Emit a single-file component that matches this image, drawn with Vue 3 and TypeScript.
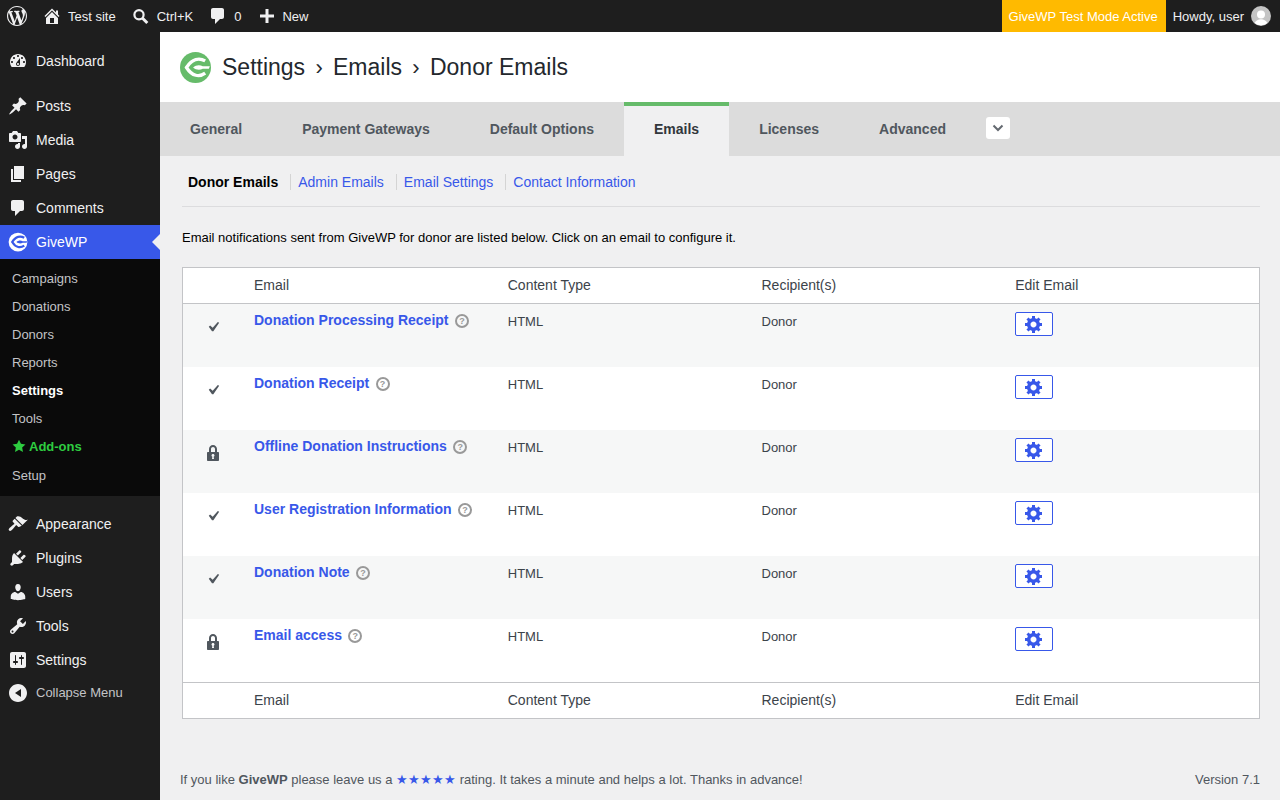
<script setup lang="ts">
const icons: Record<string, string> = {
  dashboard: 'M3.76 16h12.48c1.1-1.37 1.76-3.11 1.76-5 0-4.42-3.58-8-8-8s-8 3.58-8 8c0 1.89.66 3.63 1.76 5zM10 4c.55 0 1 .45 1 1s-.45 1-1 1-1-.45-1-1 .45-1 1-1zM6 6c.55 0 1 .45 1 1s-.45 1-1 1-1-.45-1-1 .45-1 1-1zm8 0c.55 0 1 .45 1 1s-.45 1-1 1-1-.45-1-1 .45-1 1-1zm-5.37 5.55L12 7v6c0 1.1-.9 2-2 2s-2-.9-2-2c0-.57.24-1.08.63-1.45zM4 10c.55 0 1 .45 1 1s-.45 1-1 1-1-.45-1-1 .45-1 1-1zm12 0c.55 0 1 .45 1 1s-.45 1-1 1-1-.45-1-1 .45-1 1-1zm-5 3c0-.55-.45-1-1-1s-1 .45-1 1 .45 1 1 1 1-.45 1-1z',
  pin: 'M10.44 3.02l1.82-1.82 6.36 6.35-1.83 1.82c-1.05-.68-2.48-.57-3.41.36l-.75.75c-.92.93-1.04 2.35-.35 3.41l-1.83 1.82-2.41-2.41-2.8 2.79c-.42.42-3.38 2.71-3.8 2.29s1.86-3.39 2.28-3.81l2.79-2.79L4.1 9.36l1.83-1.82c1.05.69 2.48.57 3.4-.36l.75-.75c.93-.92 1.05-2.35.36-3.41z',
  media: 'M13 11V4c0-.55-.45-1-1-1h-1.67L9 1H5L3.67 3H2c-.55 0-1 .45-1 1v7c0 .55.45 1 1 1h10c.55 0 1-.45 1-1zM7 4.5c1.38 0 2.5 1.12 2.5 2.5S8.38 9.5 7 9.5 4.5 8.38 4.5 7 5.62 4.5 7 4.5zM14 6h5v10.5c0 1.38-1.12 2.5-2.5 2.5S14 17.88 14 16.5s1.12-2.5 2.5-2.5c.17 0 .34.02.5.05V9h-3V6zm-4 8.05V13h2v3.5c0 1.38-1.12 2.5-2.5 2.5S7 17.88 7 16.5 8.12 14 9.5 14c.17 0 .34.02.5.05z',
  page: 'M6 15V2h10v13H6zm-1 1h8v2H3V5h2v11z',
  comment: 'M5 2h9c1.1 0 2 .9 2 2v7c0 1.1-.9 2-2 2h-2l-5 5v-5H5c-1.1 0-2-.9-2-2V4c0-1.1.9-2 2-2z',
  appearance: 'M14.48 11.06L7.41 3.99l1.5-1.5c.5-.56 2.3-.47 3.51.32 1.21.8 1.43 1.28 2.91 2.1 1.18.64 2.45 1.26 4.45.85zm-.71.71L6.7 4.7 4.93 6.47c-.39.39-.39 1.02 0 1.41l1.06 1.06c.39.39.39 1.03 0 1.42-.6.6-1.43 1.11-2.21 1.69-.35.26-.7.53-1.01.84C1.43 13.71-.05 15.38 1.09 16.53c1.15 1.15 2.81-.33 3.99-1.68.31-.31.58-.66.84-1.01.58-.78 1.09-1.61 1.69-2.21.39-.39 1.03-.39 1.42 0l1.06 1.06c.39.39 1.02.39 1.41 0z',
  plugin: 'M13.11 4.36L9.87 7.6 8 5.73l3.24-3.24c.35-.34 1.05-.2 1.56.32.52.51.66 1.21.31 1.55zm-8 1.77l.91-1.12 9.01 9.01-1.19.84c-.71.71-2.63 1.16-3.82 1.16H6.14L4.9 17.26c-.59.59-1.54.59-2.12 0-.59-.58-.59-1.53 0-2.12l1.24-1.24v-3.88c0-1.13.4-3.19 1.09-3.89zm7.26 3.97l3.24-3.24c.34-.35 1.04-.21 1.55.31.52.51.66 1.21.31 1.55l-3.24 3.25z',
  users: 'M10 9.25c-2.27 0-2.73-3.44-2.73-3.44C7 4.02 7.82 2 9.97 2c2.16 0 2.98 2.02 2.71 3.81 0 0-.41 3.44-2.68 3.44zm0 2.57L12.72 10c2.39 0 4.52 2.33 4.52 4.53v2.49s-3.65 1.13-7.24 1.13c-3.65 0-7.24-1.13-7.24-1.13v-2.49c0-2.25 1.94-4.48 4.47-4.48z',
  tools: 'M16.68 9.77c-1.34 1.34-3.3 1.67-4.95.99l-5.41 6.52c-.99.99-2.59.99-3.58 0s-.99-2.59 0-3.57l6.52-5.42c-.68-1.65-.35-3.61.99-4.95 1.28-1.28 3.12-1.62 4.72-1.06l-2.89 2.89 2.82 2.82 2.86-2.87c.53 1.58.18 3.39-1.08 4.65zM3.81 16.21c.4.39 1.04.39 1.43 0 .4-.4.4-1.04 0-1.43-.39-.4-1.03-.4-1.43 0-.39.39-.39 1.03 0 1.43z',
  settings: 'M18 16V4c0-1.1-.9-2-2-2H4c-1.1 0-2 .9-2 2v12c0 1.1.9 2 2 2h12c1.1 0 2-.9 2-2zM8 11h1c.55 0 1 .45 1 1s-.45 1-1 1H8v1.5c0 .28-.22.5-.5.5s-.5-.22-.5-.5V13H6c-.55 0-1-.45-1-1s.45-1 1-1h1V5.5c0-.28.22-.5.5-.5s.5.22.5.5V11zm5-2h-1c-.55 0-1-.45-1-1s.45-1 1-1h1V5.5c0-.28.22-.5.5-.5s.5.22.5.5V7h1c.55 0 1 .45 1 1s-.45 1-1 1h-1v5.5c0 .28-.22.5-.5.5s-.5-.22-.5-.5V9z',
  collapse: 'M10 19c5 0 9-4 9-9s-4-9-9-9-9 4-9 9 4 9 9 9zm3-13v8l-6-4z',
  wp: 'M20 10c0-5.51-4.49-10-10-10C4.48 0 0 4.49 0 10c0 5.52 4.48 10 10 10 5.51 0 10-4.48 10-10zM7.78 15.37L4.37 6.22c.55-.02 1.17-.08 1.17-.08.5-.06.44-1.13-.06-1.11 0 0-1.45.11-2.37.11-.18 0-.37 0-.58-.01C4.12 2.69 6.87 1.11 10 1.11c2.33 0 4.45.87 6.05 2.34-.68-.11-1.65.39-1.65 1.58 0 .74.45 1.36.9 2.1.35.61.55 1.36.55 2.46 0 1.49-1.4 5-1.4 5l-3.03-8.37c.54-.02.82-.17.82-.17.5-.05.44-1.25-.06-1.22 0 0-1.44.12-2.38.12-.87 0-2.33-.12-2.33-.12-.5-.03-.56 1.2-.06 1.22l.92.08 1.26 3.41zM17.41 10c.24-.64.74-1.87.43-4.25.7 1.29 1.05 2.71 1.05 4.25 0 3.29-1.73 6.24-4.4 7.78.97-2.59 1.94-5.2 2.92-7.78zM6.1 18.09C3.12 16.65 1.11 13.53 1.11 10c0-1.3.23-2.48.72-3.59C3.25 10.3 4.67 14.2 6.1 18.09zm4.03-6.63l2.58 6.98c-.86.29-1.76.45-2.71.45-.79 0-1.57-.11-2.29-.33.81-2.38 1.62-4.74 2.42-7.1z',
  home: 'M16 8.5l1.53 1.53-1.06 1.06L10 4.62l-6.47 6.47-1.06-1.06L10 2.5l4 4v-2h2v4zm-6-2.46l6 5.99V18H4v-5.97zM12 17v-5H8v5h4z',
  plus: 'M17 8.500v3h-5.500V17h-3v-5.500H3v-3h5.500V3h3v5.500z',
  check: 'M14.83 4.89l1.34.94-5.81 8.38H9.02L5.78 9.67l1.34-1.25 2.57 2.4z',
  lock: 'M14 9h1c.55 0 1 .45 1 1v7c0 .55-.45 1-1 1H5c-.55 0-1-.45-1-1v-7c0-.55.45-1 1-1h1V6c0-2.21 1.79-4 4-4s4 1.79 4 4v3zm-2 0V6c0-1.1-.9-2-2-2s-2 .9-2 2v3h4zm-1 7l-.36-2.15c.51-.24.86-.75.86-1.35 0-.83-.67-1.5-1.5-1.5s-1.5.67-1.5 1.5c0 .6.35 1.11.86 1.35L9 16h2z',
  gear: 'M18 12h-2.18c-.17.7-.44 1.35-.81 1.93l1.54 1.54-2.1 2.1-1.54-1.54c-.58.36-1.23.63-1.91.79V19H8v-2.18c-.68-.16-1.33-.43-1.91-.79l-1.54 1.54-2.12-2.12 1.54-1.54c-.36-.58-.63-1.23-.79-1.91H1V9.03h2.17c.16-.7.44-1.35.8-1.94L2.43 5.55l2.1-2.1 1.54 1.54c.58-.37 1.24-.64 1.93-.81V2h3v2.18c.68.16 1.33.43 1.91.79l1.54-1.54 2.12 2.12-1.54 1.54c.36.59.64 1.24.8 1.94H18V12zm-8.5 1.5c1.66 0 3-1.34 3-3s-1.34-3-3-3-3 1.34-3 3 1.34 3 3 3z',
  star: 'M10 1l2.8 5.9 6.4.8-4.7 4.4 1.2 6.4L10 15.4l-5.7 3.1 1.2-6.4L.8 7.7l6.4-.8z'
}

const giveBand = 'M26 9.200C20 5.800 12.500 6.800 6.700 16c5.800 9.200 13.300 10.200 19.300 5.800'
const giveLeaf = 'M13.500 16c3-2.800 7-3.200 10-1.200h7.300l-1 2.400h-6.300c-3 1.800-7 1.500-10-1.200z'

const topMenu = [{ label: 'Dashboard', icon: 'dashboard' }]
const contentMenu = [
  { label: 'Posts', icon: 'pin' },
  { label: 'Media', icon: 'media' },
  { label: 'Pages', icon: 'page' },
  { label: 'Comments', icon: 'comment' }
]
const subMenu = ['Campaigns', 'Donations', 'Donors', 'Reports', 'Settings', 'Tools', 'Add-ons', 'Setup']
const lowerMenu = [
  { label: 'Appearance', icon: 'appearance' },
  { label: 'Plugins', icon: 'plugin' },
  { label: 'Users', icon: 'users' },
  { label: 'Tools', icon: 'tools' },
  { label: 'Settings', icon: 'settings' }
]
const tabs = ['General', 'Payment Gateways', 'Default Options', 'Emails', 'Licenses', 'Advanced']
const sections = ['Donor Emails', 'Admin Emails', 'Email Settings', 'Contact Information']
const columns = ['Email', 'Content Type', 'Recipient(s)', 'Edit Email']
const emails = [
  { name: 'Donation Processing Receipt', status: 'check' },
  { name: 'Donation Receipt', status: 'check' },
  { name: 'Offline Donation Instructions', status: 'lock' },
  { name: 'User Registration Information', status: 'check' },
  { name: 'Donation Note', status: 'check' },
  { name: 'Email access', status: 'lock' }
]
</script>

<template>
  <div class="page">
    <header class="adminbar">
      <div class="adminbar__group">
        <svg class="adminbar__wp" viewBox="0 0 20 20"><path :d="icons.wp" /></svg>
        <span class="adminbar__item"><svg viewBox="0 0 20 20"><path :d="icons.home" /></svg>Test site</span>
        <span class="adminbar__item">
          <svg viewBox="0 0 20 20"><circle cx="8" cy="8.700" r="4.600" fill="none" stroke="currentColor" stroke-width="2.200" /><path d="M11.300 12l5 5" stroke="currentColor" stroke-width="3" /></svg>Ctrl+K
        </span>
        <span class="adminbar__item adminbar__item--count"><svg viewBox="0 0 20 20"><path :d="icons.comment" /></svg>0</span>
        <span class="adminbar__item adminbar__item--new"><svg viewBox="0 0 20 20"><path :d="icons.plus" /></svg>New</span>
      </div>
      <div class="adminbar__group">
        <span class="adminbar__test">GiveWP Test Mode Active</span>
        <span class="adminbar__user">
          Howdy, user
          <svg class="adminbar__avatar" viewBox="0 0 20 20">
            <circle cx="10" cy="10" r="10" fill="#c4c4c4" />
            <circle cx="10" cy="8.400" r="4" fill="#fff" />
            <path d="M3.600 17c1.500-2.600 3.600-3.800 6.400-3.800s4.900 1.200 6.400 3.800a10 10 0 0 1-12.800 0z" fill="#fff" />
          </svg>
        </span>
      </div>
    </header>

    <aside class="sidebar">
      <nav class="menu">
        <a v-for="m in topMenu" :key="m.label" class="menu__item"><svg viewBox="0 0 20 20"><path :d="icons[m.icon]" /></svg>{{ m.label }}</a>
      </nav>
      <nav class="menu">
        <a v-for="m in contentMenu" :key="m.label" class="menu__item"><svg viewBox="0 0 20 20"><path :d="icons[m.icon]" /></svg>{{ m.label }}</a>
        <a class="menu__item menu__item--active">
          <svg viewBox="0 0 32 32">
            <circle cx="16" cy="16" r="15" fill="#fff" />
            <path :d="giveBand" fill="none" stroke="#3858e9" stroke-width="3.600" />
            <path :d="giveLeaf" fill="#3858e9" />
          </svg>
          GiveWP
        </a>
      </nav>
      <ul class="submenu">
        <li
          v-for="s in subMenu"
          :key="s"
          class="submenu__item"
          :class="{ 'submenu__item--current': s === 'Settings', 'submenu__item--addons': s === 'Add-ons' }"
        >
          <svg v-if="s === 'Add-ons'" viewBox="0 0 20 20"><path :d="icons.star" /></svg>{{ s }}
        </li>
      </ul>
      <nav class="menu">
        <a v-for="m in lowerMenu" :key="m.label" class="menu__item"><svg viewBox="0 0 20 20"><path :d="icons[m.icon]" /></svg>{{ m.label }}</a>
        <a class="menu__item menu__item--collapse"><svg viewBox="0 0 20 20"><path :d="icons.collapse" /></svg><span>Collapse Menu</span></a>
      </nav>
    </aside>

    <main class="main">
      <div class="title">
        <svg class="title__logo" viewBox="0 0 32 32">
          <circle cx="16" cy="16" r="16" fill="#66bb6a" />
          <path :d="giveBand" fill="none" stroke="#fff" stroke-width="3.400" />
          <path :d="giveLeaf" fill="#fff" />
        </svg>
        <h1>Settings<span>›</span>Emails<span>›</span>Donor Emails</h1>
      </div>

      <div class="tabs">
        <a v-for="t in tabs" :key="t" class="tabs__tab" :class="{ 'tabs__tab--active': t === 'Emails' }">{{ t }}</a>
        <button class="tabs__more" type="button">
          <svg viewBox="0 0 12 8"><path d="M1.500 1.500L6 6l4.500-4.500" fill="none" stroke="#646970" stroke-width="2" /></svg>
        </button>
      </div>

      <section class="body">
        <ul class="sections">
          <li v-for="(s, i) in sections" :key="s" class="sections__item" :class="{ 'sections__item--current': i === 0 }">{{ s }}</li>
        </ul>
        <p class="intro">Email notifications sent from GiveWP for donor are listed below. Click on an email to configure it.</p>

        <table class="emails">
          <colgroup>
            <col class="emails__status-col" />
          </colgroup>
          <thead>
            <tr>
              <th></th>
              <th v-for="c in columns" :key="c">{{ c }}</th>
            </tr>
          </thead>
          <tbody>
            <tr v-for="e in emails" :key="e.name">
              <td class="emails__status">
                <svg viewBox="0 0 20 20"><path :d="icons[e.status]" /></svg>
              </td>
              <td>
                <a class="emails__name">{{ e.name }}</a>
                <span class="emails__help">?</span>
              </td>
              <td class="emails__cell">HTML</td>
              <td class="emails__cell">Donor</td>
              <td>
                <button class="emails__edit" type="button">
                  <svg viewBox="0 0 20 20"><path :d="icons.gear" /></svg>
                </button>
              </td>
            </tr>
          </tbody>
          <tfoot>
            <tr>
              <th></th>
              <th v-for="c in columns" :key="c">{{ c }}</th>
            </tr>
          </tfoot>
        </table>
      </section>

      <footer class="footer">
        <span>If you like <b>GiveWP</b> please leave us a <a class="footer__stars">★★★★★</a> rating. It takes a minute and helps a lot. Thanks in advance!</span>
        <span>Version 7.1</span>
      </footer>
    </main>
  </div>
</template>

<style>
html, body {
  margin: 0;
  overflow: hidden;
}
</style>

<style scoped>
.page {
  display: grid;
  grid-template-columns: 160px 1fr;
  grid-template-rows: 32px 1fr;
  height: 800px;
  overflow: hidden;
  background: #f0f0f1;
  font-family: "Liberation Sans", Arial, sans-serif;
  font-size: 13px;
  color: #3c434a;
}

.adminbar {
  grid-column: 1 / 3;
  display: flex;
  justify-content: space-between;
  background: #1e1e1e;
  color: #f0f0f1;
}

.adminbar__group {
  display: flex;
  align-items: center;
}

.adminbar svg {
  fill: currentColor;
}

.adminbar__wp {
  width: 20px;
  height: 20px;
  margin: 0 15px 0 7px;
}

.adminbar__item {
  display: flex;
  align-items: center;
  gap: 6px;
  margin-right: 15px;
}

.adminbar__item svg {
  width: 20px;
  height: 20px;
}

.adminbar__item--count {
  margin-right: 16px;
}

.adminbar__item--new {
  gap: 5px;
}

.adminbar__test {
  display: flex;
  align-items: center;
  align-self: stretch;
  padding: 0 8px 0 7px;
  background: #ffba00;
  color: #fff;
}

.adminbar__user {
  display: flex;
  align-items: center;
  gap: 7px;
  padding: 0 9px 0 7px;
}

.adminbar__avatar {
  width: 20px;
  height: 20px;
}

.sidebar {
  background: #1e1e1e;
  padding-top: 12px;
  color: #f0f0f1;
}

.menu {
  display: flex;
  flex-direction: column;
  margin-bottom: 11px;
}

.menu + .submenu {
  margin-top: -11px;
}

.menu__item {
  position: relative;
  display: flex;
  align-items: center;
  gap: 8px;
  height: 34px;
  padding-left: 8px;
  font-size: 14px;
}

.menu__item svg {
  width: 20px;
  height: 20px;
  fill: currentColor;
  flex: none;
}

.menu__item--active {
  background: #3858e9;
  color: #fff;
}

.menu__item--active::after {
  content: "";
  position: absolute;
  right: 0;
  top: 9px;
  border: 8px solid transparent;
  border-right-color: #f0f0f1;
  border-left-width: 0;
}

.menu__item--collapse {
  font-size: 13px;
  height: 32px;
}

.menu__item--collapse span {
  margin-top: -2px;
  color: #c3c4c7;
}

.submenu {
  list-style: none;
  margin: 0 0 11px;
  padding: 5px 0 7px;
  background: #0a0a0a;
}

.submenu__item {
  display: flex;
  align-items: center;
  height: 28px;
  padding-left: 12px;
  color: #c3c4c7;
}

.submenu__item:last-child {
  height: 29px;
  padding-top: 1px;
  box-sizing: border-box;
}

.submenu__item--current {
  color: #fff;
  font-weight: 700;
}

.submenu__item--addons {
  color: #2ecc40;
  font-weight: 700;
  gap: 3px;
}

.submenu__item svg {
  width: 14px;
  height: 14px;
  fill: currentColor;
}

.main {
  display: flex;
  flex-direction: column;
  min-width: 0;
}

.title {
  display: flex;
  align-items: center;
  gap: 11px;
  height: 70px;
  box-sizing: border-box;
  padding: 0 0 0 20px;
  background: #fff;
}

.title__logo {
  width: 31px;
  height: 31px;
}

.title h1 {
  margin: 0;
  font-size: 23px;
  font-weight: 400;
  color: #23282d;
}

.title h1 span {
  margin: 0 10.300px;
  font-size: 22px;
}

.tabs {
  display: flex;
  align-items: flex-start;
  height: 54px;
  background: #dcdcdc;
}

.tabs__tab {
  display: flex;
  align-items: center;
  box-sizing: border-box;
  height: 54px;
  padding: 0 30px 4px;
  border-top: 4px solid transparent;
  font-size: 14px;
  font-weight: 700;
  color: #50575e;
}

.tabs__tab--active {
  background: #f0f0f1;
  border-top-color: #66bb6a;
  color: #32373c;
}

.tabs__more {
  display: flex;
  align-items: center;
  justify-content: center;
  width: 24px;
  height: 22px;
  margin: 15px 0 0 10px;
  padding: 0;
  border: 0;
  border-radius: 3px;
  background: #fff;
}

.tabs__more svg {
  width: 12px;
  height: 8px;
}

.body {
  padding: 0 20px 0 22px;
}

.sections {
  display: flex;
  list-style: none;
  margin: 0;
  height: 50px;
  padding: 0 0 0 6px;
  border-bottom: 1px solid #dcdcde;
  font-size: 14px;
  line-height: 52px;
}

.sections__item {
  color: #3858e9;
}

.sections__item + .sections__item {
  position: relative;
  margin-left: 12px;
  padding-left: 8px;
}

.sections__item + .sections__item::before {
  content: "";
  position: absolute;
  left: 0;
  top: 18px;
  height: 16px;
  border-left: 1px solid #d4d4d4;
}

.sections__item--current {
  color: #000;
  font-weight: 700;
}

.intro {
  margin: 23px 0 21px;
  line-height: 16px;
  color: #000;
}

.emails {
  width: 100%;
  table-layout: fixed;
  border-collapse: separate;
  border-spacing: 0;
  border: 1px solid #c3c4c7;
  background: #fff;
}

.emails__status-col {
  width: 61px;
}

.emails th {
  height: 35px;
  padding: 0 0 2px 10px;
  box-sizing: border-box;
  font-size: 14px;
  font-weight: 400;
  text-align: left;
  color: #3c434a;
}

.emails thead th {
  height: 36px;
  border-bottom: 1px solid #c3c4c7;
}

.emails tfoot th {
  height: 36px;
  border-top: 1px solid #c3c4c7;
}

.emails td {
  height: 63px;
  box-sizing: border-box;
  padding: 8px 0 0 10px;
  vertical-align: top;
}

.emails tbody tr:nth-child(odd) {
  background: #f6f7f7;
}

.emails .emails__status {
  padding: 0 2px 0 0;
}

.emails__status svg {
  display: block;
  width: 20px;
  height: 20px;
  margin: 13px auto 0;
  fill: #50575e;
}

.emails__name {
  font-size: 14px;
  font-weight: 700;
  color: #3858e9;
}

.emails__help {
  display: inline-block;
  box-sizing: border-box;
  width: 14px;
  height: 14px;
  margin-left: 6.400px;
  border: 2px solid #999;
  border-radius: 50%;
  font-size: 9px;
  font-weight: 700;
  line-height: 10px;
  text-align: center;
  color: #999;
  vertical-align: 1px;
}

.emails .emails__cell {
  padding-top: 9px;
  line-height: 18px;
}

.emails__edit {
  display: flex;
  align-items: center;
  justify-content: center;
  width: 38px;
  height: 24px;
  padding: 0;
  border: 1px solid #3858e9;
  border-radius: 2px;
  background: #fff;
}

.emails__edit svg {
  width: 20px;
  height: 20px;
  fill: #3858e9;
}

.footer {
  display: flex;
  justify-content: space-between;
  margin-top: 53px;
  padding: 0 20px;
  line-height: 16px;
  color: #50575e;
}

.footer__stars {
  color: #3858e9;
}
</style>
